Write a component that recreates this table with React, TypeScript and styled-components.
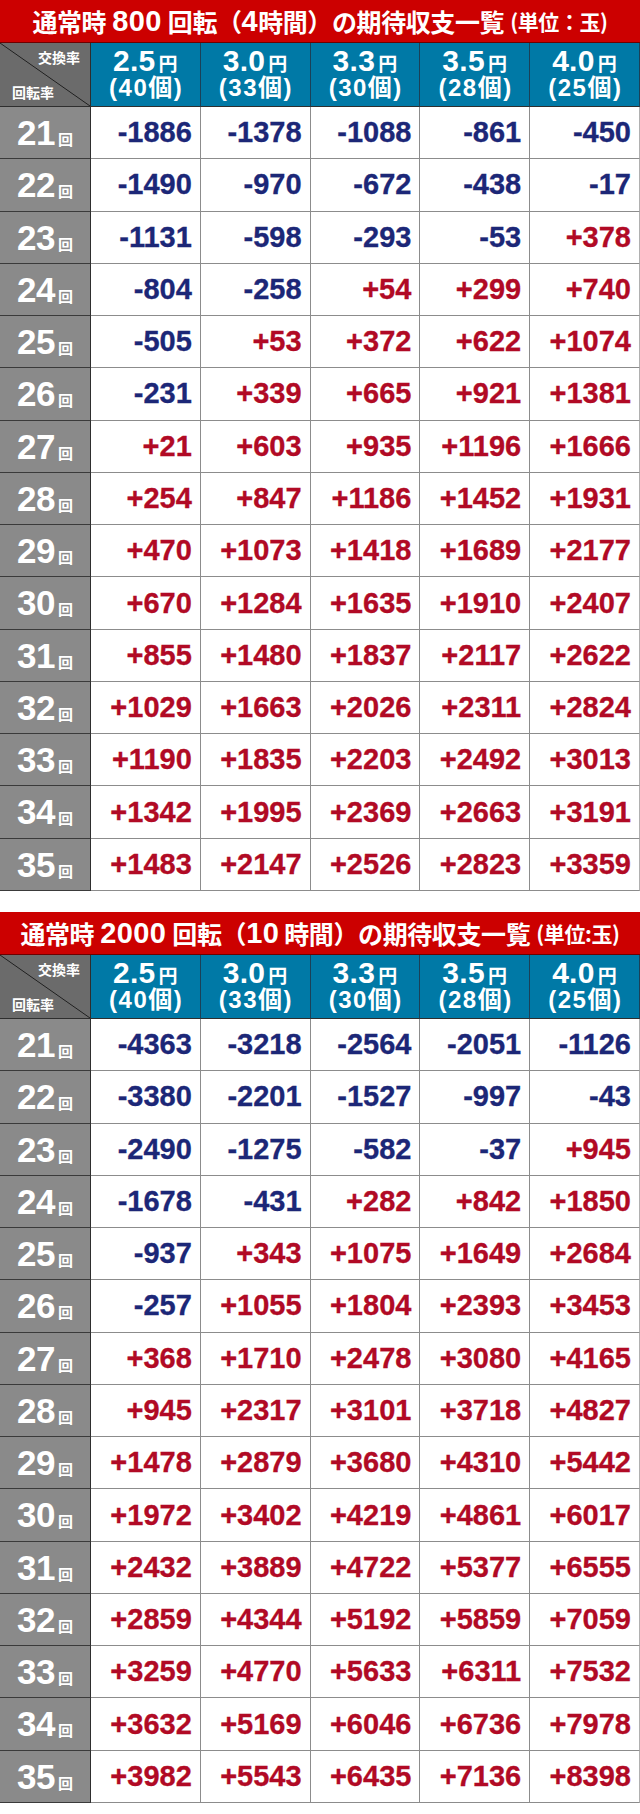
import React from 'react';
import styled, { createGlobalStyle } from 'styled-components';

const GlobalStyle = createGlobalStyle`
  html, body {
    margin: 0;
    padding: 0;
    background: #ffffff;
  }
  body {
    font-family: "Liberation Sans", "Noto Sans CJK JP", sans-serif;
  }
`;

const Page = styled.div`
  width: 640px;
  display: flex;
  flex-direction: column;
  gap: 21px;
  padding-bottom: 11px;
`;

const Section = styled.section`
  display: flex;
  flex-direction: column;
`;

const TitleBar = styled.div`
  height: 43px;
  box-sizing: border-box;
  background: #cc0000;
  border-bottom: 1px solid #6e0000;
  color: #ffffff;
  display: flex;
  align-items: center;
  justify-content: center;
  font-family: "Noto Sans CJK JP", sans-serif;
  font-weight: 700;
  font-size: 25px;
  letter-spacing: -0.4px;
  white-space: nowrap;
`;

const TitleNum = styled.span<{ $gap?: string }>`
  font-family: "Liberation Sans", sans-serif;
  font-size: 29px;
  margin: ${(p) => p.$gap ?? '0 6px'};
  letter-spacing: 0.4px;
`;

const TitleUnit = styled.span`
  font-size: 21px;
  margin-left: 6px;
`;

const Grid = styled.div`
  display: grid;
  grid-template-columns: 91px repeat(5, 1fr);
  grid-template-rows: 64px repeat(15, 1fr);
  height: 848px;
`;

const Corner = styled.div`
  box-sizing: border-box;
  background:
    linear-gradient(to top right, transparent calc(50% - 0.8px), #1e1e1e 50%, transparent calc(50% + 0.8px)),
    #6b6b6b;
  border-right: 1px solid #2e2e2e;
  border-bottom: 1px solid #2e2e2e;
  color: #ffffff;
  font-family: "Noto Sans CJK JP", sans-serif;
  font-weight: 700;
  font-size: 14px;
  line-height: 14px;
  display: flex;
  flex-direction: column;
  justify-content: space-between;
  padding: 7px 10px 7px 12px;
`;

const CornerText = styled.span<{ $align: 'left' | 'right' }>`
  text-align: ${(p) => p.$align};
`;

const HeadCell = styled.div`
  box-sizing: border-box;
  background: #0079a6;
  border-right: 1px solid #1b4158;
  border-bottom: 1px solid #2e2e2e;
  color: #ffffff;
  font-weight: 700;
  display: flex;
  flex-direction: column;
  align-items: center;
  justify-content: center;
  padding-bottom: 2px;

  &:last-child {
    border-right: 1px solid #5f7f90;
  }
`;

const Rate = styled.div`
  font-family: "Liberation Sans", sans-serif;
  font-size: 30px;
  line-height: 26px;
  letter-spacing: 0.3px;
  white-space: nowrap;
`;

const Yen = styled.span`
  font-family: "Noto Sans CJK JP", sans-serif;
  font-size: 19px;
  margin-left: 3px;
`;

const Count = styled.div`
  font-family: "Liberation Sans", "Noto Sans CJK JP", sans-serif;
  font-size: 24px;
  line-height: 24px;
  letter-spacing: 1.5px;
  margin-right: -1.5px;
  white-space: nowrap;
`;

const LabelCell = styled.div`
  box-sizing: border-box;
  background: #8a8a8a;
  border-right: 1px solid #2e2e2e;
  border-bottom: 1px solid #3a3a3a;
  color: #ffffff;
  font-weight: 700;
  display: flex;
  align-items: baseline;
  justify-content: center;
  padding-top: 8px;
`;

const LabelNum = styled.span`
  font-family: "Liberation Sans", sans-serif;
  font-size: 35px;
  line-height: 36px;
  letter-spacing: -0.5px;
`;

const LabelUnit = styled.span`
  font-family: "Noto Sans CJK JP", sans-serif;
  font-size: 15px;
  margin-left: 3px;
`;

const ValueCell = styled.div<{ $plus: boolean }>`
  box-sizing: border-box;
  background: #ffffff;
  border-right: 1px solid #8c8c8c;
  border-bottom: 1px solid #8c8c8c;
  color: ${(p) => (p.$plus ? '#b10a25' : '#1c2777')};
  font-family: "Liberation Sans", sans-serif;
  font-weight: 700;
  font-size: 29px;
  -webkit-text-stroke: 0.3px currentColor;
  display: flex;
  align-items: center;
  justify-content: flex-end;
  padding-right: 8px;

  &:nth-child(6n) {
    border-right: 1px solid #b0b0b0;
  }
`;

const heads = [
  { rate: '2.5', count: '40' },
  { rate: '3.0', count: '33' },
  { rate: '3.3', count: '30' },
  { rate: '3.5', count: '28' },
  { rate: '4.0', count: '25' },
];

const table800 = [
  ['-1886', '-1378', '-1088', '-861', '-450'],
  ['-1490', '-970', '-672', '-438', '-17'],
  ['-1131', '-598', '-293', '-53', '+378'],
  ['-804', '-258', '+54', '+299', '+740'],
  ['-505', '+53', '+372', '+622', '+1074'],
  ['-231', '+339', '+665', '+921', '+1381'],
  ['+21', '+603', '+935', '+1196', '+1666'],
  ['+254', '+847', '+1186', '+1452', '+1931'],
  ['+470', '+1073', '+1418', '+1689', '+2177'],
  ['+670', '+1284', '+1635', '+1910', '+2407'],
  ['+855', '+1480', '+1837', '+2117', '+2622'],
  ['+1029', '+1663', '+2026', '+2311', '+2824'],
  ['+1190', '+1835', '+2203', '+2492', '+3013'],
  ['+1342', '+1995', '+2369', '+2663', '+3191'],
  ['+1483', '+2147', '+2526', '+2823', '+3359'],
];

const table2000 = [
  ['-4363', '-3218', '-2564', '-2051', '-1126'],
  ['-3380', '-2201', '-1527', '-997', '-43'],
  ['-2490', '-1275', '-582', '-37', '+945'],
  ['-1678', '-431', '+282', '+842', '+1850'],
  ['-937', '+343', '+1075', '+1649', '+2684'],
  ['-257', '+1055', '+1804', '+2393', '+3453'],
  ['+368', '+1710', '+2478', '+3080', '+4165'],
  ['+945', '+2317', '+3101', '+3718', '+4827'],
  ['+1478', '+2879', '+3680', '+4310', '+5442'],
  ['+1972', '+3402', '+4219', '+4861', '+6017'],
  ['+2432', '+3889', '+4722', '+5377', '+6555'],
  ['+2859', '+4344', '+5192', '+5859', '+7059'],
  ['+3259', '+4770', '+5633', '+6311', '+7532'],
  ['+3632', '+5169', '+6046', '+6736', '+7978'],
  ['+3982', '+5543', '+6435', '+7136', '+8398'],
];

const ExpectTable = ({ title, rows }: { title: React.ReactNode; rows: string[][] }) => (
  <Section>
    <TitleBar>{title}</TitleBar>
    <Grid>
      <Corner>
        <CornerText $align="right">交換率</CornerText>
        <CornerText $align="left">回転率</CornerText>
      </Corner>
      {heads.map((h) => (
        <HeadCell key={h.rate}>
          <Rate>
            {h.rate}
            <Yen>円</Yen>
          </Rate>
          <Count>({h.count}個)</Count>
        </HeadCell>
      ))}
      {rows.map((row, i) => (
        <React.Fragment key={i}>
          <LabelCell>
            <LabelNum>{21 + i}</LabelNum>
            <LabelUnit>回</LabelUnit>
          </LabelCell>
          {row.map((v, j) => (
            <ValueCell key={j} $plus={v.startsWith('+')}>
              {v}
            </ValueCell>
          ))}
        </React.Fragment>
      ))}
    </Grid>
  </Section>
);

export default function App() {
  return (
    <>
      <GlobalStyle />
      <Page>
        <ExpectTable
          rows={table800}
          title={
            <>
              通常時<TitleNum>800</TitleNum>回転（<TitleNum $gap="0">4</TitleNum>時間）の期待収支一覧
              <TitleUnit>(単位：玉)</TitleUnit>
            </>
          }
        />
        <ExpectTable
          rows={table2000}
          title={
            <>
              通常時<TitleNum>2000</TitleNum>回転（<TitleNum $gap="0 5px 0 0">10</TitleNum>時間）の期待収支一覧
              <TitleUnit>(単位:玉)</TitleUnit>
            </>
          }
        />
      </Page>
    </>
  );
}
